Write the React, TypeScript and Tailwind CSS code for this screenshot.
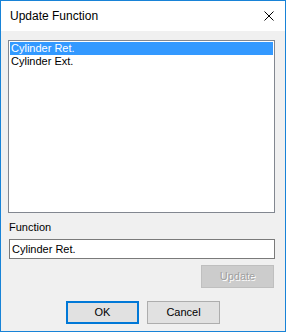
const items = ["Cylinder Ret.", "Cylinder Ext."];

const CloseIcon = () => (
  <svg width="10" height="10" viewBox="0 0 10 10" shapeRendering="crispEdges">
    <path d="M0.5 0.5L9.5 9.5M9.5 0.5L0.5 9.5" stroke="#000" strokeWidth="1" shapeRendering="auto" />
  </svg>
);

const App = () => {
  return (
    <div
      className="w-[286px] h-[332px] border border-[#1883d7] flex flex-col bg-[#f0f0f0] text-black"
      style={{ fontFamily: '"Liberation Sans", Arial, sans-serif' }}
    >
      <div className="h-[30px] bg-white flex items-center justify-between pl-[9px] pr-[11px] shrink-0">
        <span className="text-[12px] leading-[14px]">Update Function</span>
        <CloseIcon />
      </div>

      <div className="flex flex-col pt-[9px] pl-[7px] pr-[10px] text-[11px] leading-[13px]">
        <div className="h-[173px] border border-[#828790] bg-white p-[1px]">
          {items.map((item, i) => (
            <div
              key={item}
              className={
                i === 0
                  ? "h-[13px] pl-[1px] bg-[#3399ff] text-white"
                  : "h-[13px] pl-[1px]"
              }
            >
              {item}
            </div>
          ))}
        </div>

        <label className="mt-[8px] pl-[1px]">Function</label>
        <div className="mt-[5px] ml-[1px] h-[20px] border border-[#7a7a7a] bg-white flex items-center pl-[2px]">
          Cylinder Ret.
        </div>

        <div className="flex justify-end mt-[6px] mr-[1px]">
          <button className="w-[73px] h-[23px] bg-[#cccccc] border border-[#bfbfbf] text-[#a0a0a0] [text-shadow:1px_1px_0_#ffffff]">
            Update
          </button>
        </div>
      </div>

      <div className="flex justify-center gap-[8px] mt-[13px]">
        <button className="w-[73px] h-[23px] bg-[#e1e1e1] border-2 border-[#0078d7] text-[11px]">
          OK
        </button>
        <button className="w-[73px] h-[23px] bg-[#e1e1e1] border border-[#adadad] text-[11px]">
          Cancel
        </button>
      </div>
    </div>
  );
};

export default App;
